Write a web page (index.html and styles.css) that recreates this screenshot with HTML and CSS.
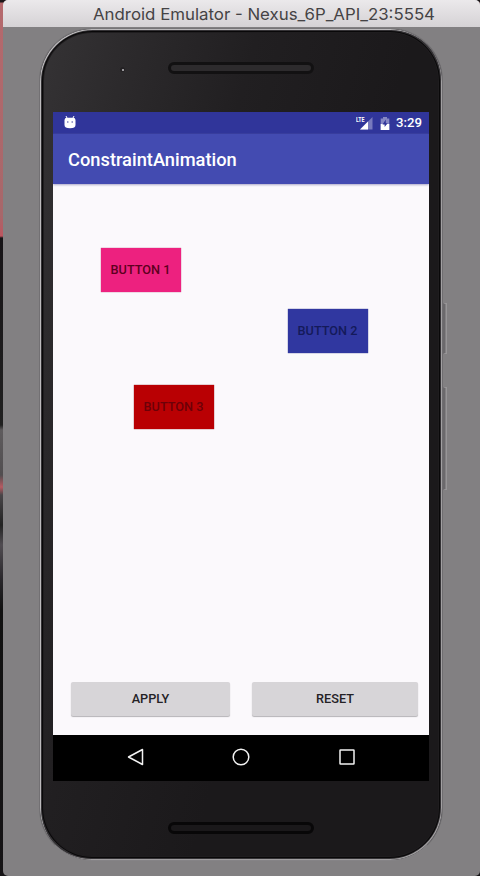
FILE: index.html
```html
<!DOCTYPE html>
<html lang="en">
<head>
<meta charset="utf-8">
<title>Android Emulator</title>
<link rel="stylesheet" href="styles.css">
</head>
<body>
<div class="desktop">
  <main class="window">
    <header class="titlebar"><svg class="window-title" width="343" height="27"><text x="0" y="20" textLength="342" lengthAdjust="spacingAndGlyphs">Android Emulator - Nexus_6P_API_23:5554</text></svg></header>
    <div class="phone">
      <div class="bezel top"><i class="camera"></i><i class="speaker"></i></div>
      <div class="screen">
        <div class="statusbar">
          <svg class="droid" width="12" height="13" viewBox="0 0 12 13">
            <path d="M2 0L3.200 2.400M10 0L8.800 2.400" stroke="#fff"/>
            <path d="M.5 4Q.5 1.800 3 1.800H9Q11.500 1.800 11.500 4V9Q11.500 12.300 6 12.300Q.5 12.300 .5 9Z" fill="#fff"/>
            <circle cx="3.800" cy="6" r=".8" fill="#5559a8"/><circle cx="8.200" cy="6" r=".8" fill="#5559a8"/>
          </svg>
          <svg class="signal" width="17" height="15" viewBox="0 0 17 15">
            <text x="0" y="6" class="lte" textLength="8.500" lengthAdjust="spacingAndGlyphs">LTE</text>
            <path d="M16.500 1V13.500H4Z" fill="#7779bd"/><path d="M12 5.500V13.500H4Z" fill="#fff"/>
          </svg>
          <svg class="battery" width="10" height="15" viewBox="0 0 10 15">
            <path d="M3 1H7V2.500H9.300V14H.7V2.500H3Z" fill="#8587c4"/><path d="M.7 8H9.300V14H.7Z" fill="#fff"/>
            <path d="M5.800 3.500L2.500 8.500H4.600V11L7.700 7.200H5.800Z" fill="#30359a"/>
          </svg>
          <span class="clock">3:29</span>
        </div>
        <div class="appbar">ConstraintAnimation</div>
        <div class="content">
          <button class="box pink">BUTTON 1</button>
          <button class="box blue">BUTTON 2</button>
          <button class="box red">BUTTON 3</button>
          <div class="actions">
            <button class="action apply">APPLY</button>
            <button class="action reset">RESET</button>
          </div>
        </div>
        <nav class="navbar">
          <svg width="18" height="18" viewBox="0 0 18 18"><path d="M2.500 9L16.500 1.500V16.500Z"/></svg>
          <svg width="18" height="18" viewBox="0 0 18 18"><circle cx="9" cy="9" r="7.800"/></svg>
          <svg width="18" height="18" viewBox="0 0 18 18"><rect x="2" y="2" width="14" height="14" rx=".5"/></svg>
        </nav>
      </div>
      <div class="bezel bottom"><i class="speaker"></i></div>
    </div>
    <div class="side-keys"><i class="key power"></i><i class="key volume"></i></div>
  </main>
</div>
</body>
</html>
```

FILE: styles.css
```css
* { box-sizing: border-box; }
body { margin: 0; font-family: Roboto, "Liberation Sans", sans-serif; }
button { border: 0; padding: 0 0 1px; font: 500 12.700px Roboto, sans-serif; }
svg { display: block; flex: none; }

.desktop {
  width: 480px;
  height: 876px;
  padding-left: 3px;
  overflow: hidden;
  background: linear-gradient(#1b1719 0 2px, #b5696d 3px, #a7676a 215px, #bd5660 236px, #171417 238px, #202020 425px, #5e5b5d 430px, #514e50 475px, #b65b62 487px, #494649 495px, #222 525px, #504c51 545px, #28262a 580px, #111 610px, #161416 876px);
}
.window {
  display: flex;
  flex-wrap: wrap;
  align-content: flex-start;
  height: 876px;
  border-radius: 5px;
  overflow: hidden;
  background: #828082;
}
.titlebar {
  width: 100%;
  height: 27px;
  background: linear-gradient(#ebe9eb, #d5d2d5);
}
.window-title { margin-left: 90px; }
.window-title text { font: 16.500px Inter, Roboto, sans-serif; fill: #454345; }

.phone {
  width: 404px;
  height: 833px;
  margin: 1px 0 0 36px;
  padding: 3px 11px 2px 12px;
  border: 1px solid;
  border-color: #777578 #6f6d70 #858386 #727073;
  border-radius: 53px;
  background: linear-gradient(105deg, #353335 0%, #2c2a2c 15%, #211f21 35%, #1b191b 60%, #1b191b 100%);
  box-shadow: inset 1px 1px 0 #bcbabc, inset -1px -1px 0 #a19fa1, inset 0 0 0 2px #343235, inset 0 0 0 3px #090809, inset 0 0 0 4px #1f1d1f;
}
.bezel { display: flex; }
.top { height: 80px; padding-top: 30px; }
.bottom { height: 77px; padding: 41px 0 0 116px; }
.camera {
  width: 5px;
  height: 5px;
  margin: 5px 43px 0 68px;
  border-radius: 50%;
  background: radial-gradient(circle at 60% 60%, #99979b 0 1px, #232123 1.500px);
}
.speaker {
  width: 146px;
  height: 12px;
  border: 3px solid #121112;
  border-radius: 7px;
  background: #2d2b2d;
}
.bottom .speaker { border-color: #080708; background: #1a181a; }

.screen { width: 376px; height: 669px; margin-left: 1px; overflow: hidden; background: #fbf9fc; }
.statusbar {
  display: flex;
  align-items: center;
  height: 22px;
  padding: 0 7px 0 11px;
  background: #30359a;
  color: #fff;
}
.droid { margin-top: -2px; }
.signal { margin-left: auto; }
.lte { font: 700 7px Roboto, sans-serif; fill: #fff; }
.battery { margin: 0 6px 0 7px; }
.clock { font-size: 13.200px; font-weight: 500; line-height: 22px; }
.appbar {
  height: 50px;
  padding-left: 15px;
  background: #434bb1;
  box-shadow: 0 1px 2px #aaa8c8;
  color: #fff;
  font-size: 18.300px;
  font-weight: 500;
  line-height: 51px;
}
.content {
  display: flex;
  flex-direction: column;
  height: 551px;
  padding: 64px 11px 19px 18px;
}
.box { width: 80px; height: 44px; padding-right: 1px; }
.pink { margin-left: 30px; background: #ed217f; color: #5d0020; box-shadow: 0 0 1px #b63670; }
.blue { margin: 17px 0 0 217px; background: #3037a0; color: #141a5a; box-shadow: 0 0 1px #202580; }
.red { margin: 32px 0 0 63px; background: #b90003; color: #6c0008; box-shadow: 0 0 1px #850010; }
.actions { display: flex; justify-content: space-between; margin-top: auto; }
.action {
  height: 34px;
  border-radius: 2px;
  background: #d7d5d8;
  color: #242226;
  box-shadow: 0 1px 1px #b5b3b7;
}
.apply { width: 159px; }
.reset { width: 166px; }
.navbar {
  display: flex;
  justify-content: space-between;
  height: 46px;
  padding: 13px 73px 0;
  background: #000;
}
.navbar svg { fill: none; stroke: #f2f2f2; stroke-width: 1.500; stroke-linejoin: round; }

.side-keys { width: 4px; padding-top: 276px; }
.key { display: block; width: 4px; border: 1px solid #979597; border-left: 2px solid #6b696c; }
.power { height: 51px; }
.volume { height: 103px; margin-top: 33px; }
```
